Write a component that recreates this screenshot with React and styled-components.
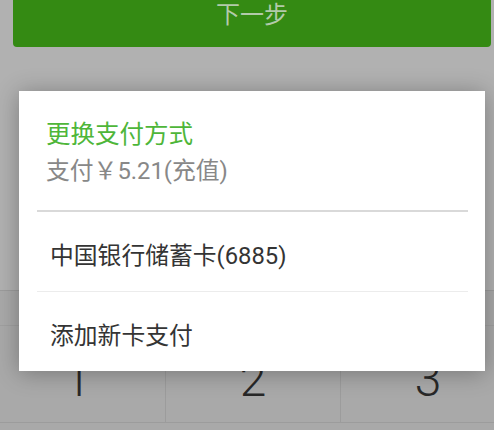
import React from 'react'
import styled, { createGlobalStyle } from 'styled-components'

const GlobalStyle = createGlobalStyle`
    html, body {
        margin: 0;
        padding: 0;
        background-color: rgb(177, 177, 177);
        overflow: hidden;
    }
    body {
        font-family: Roboto, "Noto Sans CJK SC", sans-serif;
    }
`;

const Screen = styled.div`
    position: relative;
    width: 525px;
    height: 430px;
    margin-left: -10px;
    display: flex;
    flex-direction: column;
    background-color: rgb(177, 177, 177);
`;

const NextButton = styled.div`
    margin: -20px 24px 0 23px;
    height: 67px;
    background-color: rgb(52, 138, 19);
    border-radius: 4px;
    display: flex;
    align-items: flex-end;
    justify-content: center;
    padding-bottom: 18px;
    box-sizing: border-box;
    color: rgb(178, 202, 170);
    font-size: 24px;
    line-height: 28px;
`;

const Keypad = styled.div`
    margin-top: 243px;
    flex: 1;
    display: flex;
    flex-direction: column;
    background-color: rgb(169, 169, 169);
    border-top: 1px solid rgb(156, 156, 156);
`;

const KeypadHeader = styled.div`
    height: 34px;
    border-bottom: 1px solid rgb(160, 160, 160);
`;

const KeyRow = styled.div`
    display: grid;
    grid-template-columns: repeat(3, 1fr);
    height: 96px;
    border-bottom: 1px solid rgb(156, 156, 156);
`;

const Key = styled.div`
    display: flex;
    justify-content: center;
    padding-top: 30px;
    font-family: Roboto, sans-serif;
    font-weight: 300;
    font-size: 48px;
    line-height: 48px;
    color: rgb(40, 40, 40);
    border-left: ${props => props.first ? 'none' : '1px solid rgb(156, 156, 156)'};
`;

const Dialog = styled.div`
    position: absolute;
    top: 91px;
    left: 29px;
    width: 466px;
    height: 280px;
    background-color: white;
    box-shadow: 0 2px 22px rgba(0, 0, 0, 0.3);
    display: flex;
    flex-direction: column;
`;

const DialogHead = styled.div`
    padding: 28px 27px 0;
    display: flex;
    flex-direction: column;
    gap: 4px;
`;

const DialogTitle = styled.div`
    color: rgb(78, 182, 57);
    font-size: 24.5px;
    line-height: 32px;
`;

const DialogSub = styled.div`
    color: rgb(136, 136, 136);
    font-size: 23.8px;
    line-height: 32px;
`;

const Divider = styled.div`
    margin: ${props => props.top ? '23px' : '0'} 17px 0 18px;
    height: 2px;
    background-color: ${props => props.light ? 'rgb(236, 236, 236)' : 'rgb(217, 217, 217)'};
`;

const Option = styled.div`
    height: 79px;
    display: flex;
    align-items: center;
    padding: 4px 31px 0;
    box-sizing: border-box;
    color: rgb(52, 52, 52);
    font-size: 23.8px;
`;

export default function App() {
    return (
        <>
            <GlobalStyle />
            <Screen>
                <NextButton>下一步</NextButton>
                <Keypad>
                    <KeypadHeader />
                    <KeyRow>
                        <Key first>1</Key>
                        <Key>2</Key>
                        <Key>3</Key>
                    </KeyRow>
                </Keypad>
                <Dialog>
                    <DialogHead>
                        <DialogTitle>更换支付方式</DialogTitle>
                        <DialogSub>支付￥5.21(充值)</DialogSub>
                    </DialogHead>
                    <Divider top />
                    <Option>中国银行储蓄卡(6885)</Option>
                    <Divider light />
                    <Option>添加新卡支付</Option>
                </Dialog>
            </Screen>
        </>
    )
}
